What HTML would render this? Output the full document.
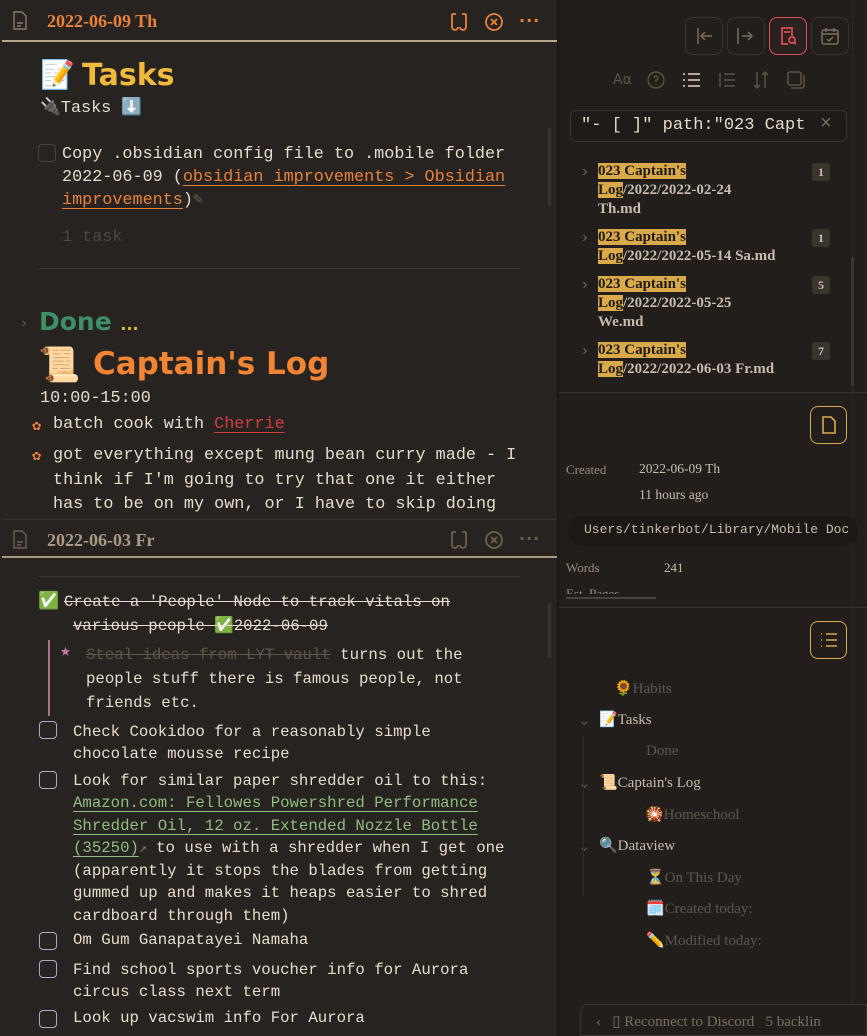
<!DOCTYPE html>
<html><head><meta charset="utf-8"><style>
*{margin:0;padding:0;box-sizing:border-box}
body{width:867px;height:1036px;background:#272320;overflow:hidden;position:relative;font-family:"Liberation Mono",monospace;color:#e6dccd}
.a{position:absolute;white-space:nowrap}
.mono{font-family:"Liberation Mono",monospace;font-size:16.8px;color:#e6dccd}
.m2{font-size:15.7px}
.hdr{font-family:"Liberation Serif",serif;font-weight:bold;font-size:18px}
.ser{font-family:"Liberation Serif",serif}
.cb{position:absolute;width:18px;height:18px;border:1.5px solid #b9a3d6;border-radius:4px}
.lnk{color:#e8823a;text-decoration:underline;text-underline-offset:4px}
.grn{color:#8fbf7f;text-decoration:underline;text-underline-offset:4px}
.hl{background:#d9a94a;color:#1d1a17;font-weight:bold}
.badge{position:absolute;left:812px;width:18px;height:18px;background:#3a342e;border-radius:3px;color:#cbbfae;font:bold 12px "Liberation Serif",serif;text-align:center;line-height:18px}
.tree{font-family:"Liberation Serif",serif;font-size:15px;color:#5f574f}
.dots{position:absolute;font:bold 16px "DejaVu Sans",sans-serif;letter-spacing:1px}
</style></head><body>
<svg class="a" style="left:12px;top:11px" width="16" height="20" viewBox="0 0 16 20"><path d="M2 1h8l4 4v13H2z M5 12h6 M5 15h4" fill="none" stroke="#8a7d6a" stroke-width="1.4"/></svg>
<div class="a hdr" style="left:47px;top:11px;color:#e8823a">2022-06-09 Th</div>
<svg class="a" style="left:449px;top:12px" width="20" height="20" viewBox="0 0 20 20" fill="none" stroke="#e8823a" stroke-width="1.8"><path d="M3 2h4M13 2h4M3 2v13M17 2v13M3 15a3 3 0 0 0 6 0M11 15a3 3 0 0 0 6 0"/></svg>
<svg class="a" style="left:484px;top:12px" width="20" height="20" viewBox="0 0 20 20" fill="none" stroke="#e8823a" stroke-width="1.8"><circle cx="10" cy="10" r="8"/><path d="M7 7l6 6M13 7l-6 6"/></svg>
<div class="dots" style="left:519px;top:11px;color:#e8823a">···</div>
<div class="a" style="left:2px;top:40px;width:555px;height:2px;background:#bba886"></div>

<div class="a" style="left:40px;top:58px;font-size:28px">📝</div>
<div class="a" style="left:82px;top:58px;font:bold 30px 'DejaVu Sans',sans-serif;color:#f3b93d">Tasks</div>
<div class="a mono" style="left:40px;top:97px">🔌Tasks ⬇️</div>
<div class="a" style="left:548px;top:128px;width:3px;height:78px;background:#3a342e"></div>
<div class="cb" style="left:38px;top:144px;border-color:#4a433c;border-width:1.5px"></div>
<div class="a mono" style="left:62px;top:143px;line-height:23px">Copy .obsidian config file to .mobile folder<br>2022-06-09 (<span class="lnk">obsidian improvements &gt; Obsidian </span><br><span class="lnk">improvements</span>)<span style="color:#6b5f50">✎</span></div>
<div class="a mono" style="left:62px;top:228px;color:#514840">1 task</div>
<div class="a" style="left:38px;top:268px;width:482px;height:1px;background:#3d3731"></div>

<div class="a" style="left:20px;top:316px;color:#6b6058;font-size:13px">›</div>
<div class="a" style="left:39px;top:307px;font:bold 25px 'DejaVu Sans',sans-serif;color:#3f8f68">Done <span style="color:#e0c020;font-size:16px">...</span></div>
<div class="a" style="left:38px;top:345px;font-size:34px">📜</div>
<div class="a" style="left:93px;top:346px;font:bold 31px 'DejaVu Sans',sans-serif;color:#f28434">Captain's Log</div>
<div class="a mono" style="left:40px;top:389px">10:00-15:00</div>
<div class="a" style="left:32px;top:416px;color:#e8823a;font-size:15px">✿</div>
<div class="a mono" style="left:53px;top:415px">batch cook with <span style="color:#d23e3e;text-decoration:underline;text-underline-offset:4px">Cherrie</span></div>
<div class="a" style="left:32px;top:446px;color:#e8823a;font-size:15px">✿</div>
<div class="a mono" style="left:53px;top:444px;line-height:24.5px">got everything except mung bean curry made - I<br>think if I'm going to try that one it either<br>has to be on my own, or I have to skip doing</div>

<div class="a" style="left:2px;top:519px;width:555px;height:38px;background:#272320;border-top:1px solid #3a342e"></div>
<svg class="a" style="left:12px;top:530px" width="16" height="20" viewBox="0 0 16 20"><path d="M2 1h8l4 4v13H2z M5 12h6 M5 15h4" fill="none" stroke="#6b6053" stroke-width="1.4"/></svg>
<div class="a hdr" style="left:47px;top:530px;color:#a99a86">2022-06-03 Fr</div>
<svg class="a" style="left:449px;top:530px" width="20" height="20" viewBox="0 0 20 20" fill="none" stroke="#6b6053" stroke-width="1.8"><path d="M3 2h4M13 2h4M3 2v13M17 2v13M3 15a3 3 0 0 0 6 0M11 15a3 3 0 0 0 6 0"/></svg>
<svg class="a" style="left:484px;top:530px" width="20" height="20" viewBox="0 0 20 20" fill="none" stroke="#6b6053" stroke-width="1.8"><circle cx="10" cy="10" r="8"/><path d="M7 7l6 6M13 7l-6 6"/></svg>
<div class="dots" style="left:519px;top:529px;color:#6b6053">···</div>
<div class="a" style="left:2px;top:556px;width:555px;height:2px;background:#a8967a"></div>
<div class="a" style="left:38px;top:576px;width:482px;height:1px;background:#3d3731"></div>
<div class="a" style="left:548px;top:603px;width:3px;height:55px;background:#3a342e"></div>

<div class="a" style="left:38px;top:591px;font-size:17px">✅</div>
<div class="a mono m2" style="left:64px;top:593px;text-decoration:line-through">Create a 'People' Node to track vitals on </div>
<div class="a mono m2" style="left:73px;top:615px;text-decoration:line-through">various people ✅2022-06-09</div>
<div class="a" style="left:48px;top:640px;width:2px;height:76px;background:#b0708f"></div>
<div class="a" style="left:60px;top:640px;color:#c079a0;font-size:18px">★</div>
<div class="a mono m2" style="left:86px;top:643px;line-height:24px"><span style="color:#5f564c;text-decoration:line-through">Steal ideas from LYT vault</span> turns out the<br>people stuff there is famous people, not<br>friends etc.</div>
<div class="cb" style="left:39px;top:721px"></div>
<div class="a mono m2" style="left:73px;top:721px;line-height:22px">Check Cookidoo for a reasonably simple<br>chocolate mousse recipe</div>
<div class="cb" style="left:39px;top:771px"></div>
<div class="a mono m2" style="left:73px;top:770px;line-height:22.3px">Look for similar paper shredder oil to this:<br><span class="grn">Amazon.com: Fellowes Powershred Performance </span><br><span class="grn">Shredder Oil, 12 oz. Extended Nozzle Bottle </span><br><span class="grn">(35250)</span><span style="color:#8a7d6a;font-size:13px">↗</span> to use with a shredder when I get one<br>(apparently it stops the blades from getting<br>gummed up and makes it heaps easier to shred<br>cardboard through them)</div>
<div class="cb" style="left:39px;top:932px"></div>
<div class="a mono m2" style="left:73px;top:931px">Om Gum Ganapatayei Namaha</div>
<div class="cb" style="left:39px;top:960px"></div>
<div class="a mono m2" style="left:73px;top:959px;line-height:22px">Find school sports voucher info for Aurora<br>circus class next term</div>
<div class="cb" style="left:39px;top:1010px"></div>
<div class="a mono m2" style="left:73px;top:1009px">Look up vacswim info For Aurora</div>

<div class="a" style="left:557px;top:0;width:2px;height:1036px;background:#1b1815"></div>
<div class="a" style="left:559px;top:0;width:308px;height:1036px;background:#221e1b"></div>
<div class="a" style="left:852px;top:0;width:1px;height:1036px;background:#2f2a25"></div>
<div class="a" style="left:685px;top:17px;width:38px;height:38px;border:1px solid #3a342e;border-radius:8px"></div>
<div class="a" style="left:727px;top:17px;width:38px;height:38px;border:1px solid #3a342e;border-radius:8px"></div>
<div class="a" style="left:769px;top:17px;width:38px;height:38px;border:1.5px solid #e05050;border-radius:8px;background:#2a2220"></div>
<div class="a" style="left:811px;top:17px;width:38px;height:38px;border:1px solid #3a342e;border-radius:8px"></div>
<svg class="a" style="left:694px;top:26px" width="20" height="20" viewBox="0 0 20 20" fill="none" stroke="#7a6e60" stroke-width="1.5"><path d="M4 2v16M18 10H7M11 6l-4 4 4 4"/></svg>
<svg class="a" style="left:736px;top:26px" width="20" height="20" viewBox="0 0 20 20" fill="none" stroke="#7a6e60" stroke-width="1.5"><path d="M2 2v16M16 10H6M12 6l4 4-4 4"/></svg>
<svg class="a" style="left:778px;top:26px" width="20" height="20" viewBox="0 0 20 20" fill="none" stroke="#e05050" stroke-width="1.7"><path d="M10 18H4V2h10v8M6 6h6"/><circle cx="14" cy="14" r="3"/><path d="M16 16l2 2"/></svg>
<svg class="a" style="left:820px;top:26px" width="20" height="20" viewBox="0 0 20 20" fill="none" stroke="#7a6e60" stroke-width="1.5"><rect x="2" y="4" width="16" height="14" rx="2"/><path d="M2 8h16M6 2v4M14 2v4M7 13l2 2 4-4"/></svg>
<div class="a" style="left:613px;top:72px;color:#5d5448;font:14px 'DejaVu Sans',sans-serif">Aα</div>
<svg class="a" style="left:647px;top:71px" width="18" height="18" viewBox="0 0 18 18" fill="none" stroke="#5d5448" stroke-width="1.4"><circle cx="9" cy="9" r="8"/><path d="M7 7a2 2 0 1 1 2 2v2M9 13v1"/></svg>
<svg class="a" style="left:682px;top:72px" width="18" height="16" viewBox="0 0 18 16" fill="none" stroke="#c8bcad" stroke-width="1.8"><path d="M6 2h12M6 8h12M6 14h12M1 2h2M1 8h2M1 14h2"/></svg>
<svg class="a" style="left:717px;top:72px" width="18" height="16" viewBox="0 0 18 16" fill="none" stroke="#5d5448" stroke-width="1.5"><path d="M7 2h11M7 8h11M7 14h11M3 1v14"/></svg>
<svg class="a" style="left:752px;top:70px" width="18" height="20" viewBox="0 0 18 20" fill="none" stroke="#5d5448" stroke-width="1.5"><path d="M5 2v16M2 15l3 3 3-3M13 18V2M10 5l3-3 3 3"/></svg>
<svg class="a" style="left:787px;top:71px" width="18" height="18" viewBox="0 0 18 18" fill="none" stroke="#5d5448" stroke-width="1.5"><rect x="1" y="1" width="13" height="13" rx="2"/><path d="M17 4v11a2 2 0 0 1-2 2H4"/></svg>
<div class="a" style="left:570px;top:110px;width:277px;height:32px;border:1px solid #3a342e;border-radius:6px;background:#1f1b18;overflow:hidden"></div>
<div class="a mono" style="left:581px;top:116px;width:230px;overflow:hidden;font-size:17px">"- [ ]" path:"023 Capt</div>
<div class="a" style="left:820px;top:113px;color:#7a6e60;font-size:20px">×</div>
<div class="a" style="left:851px;top:258px;width:3px;height:128px;background:#3d3731"></div>
<div class="ser" style="position:absolute;left:598px;top:162px;font-size:15px;line-height:19px;color:#c8bcad;font-weight:bold">
<div style="height:66px"><span class="hl">023 Captain's</span><br><span class="hl">Log</span>/2022/2022-02-24<br>Th.md</div>
<div style="height:47px"><span class="hl">023 Captain's</span><br><span class="hl">Log</span>/2022/2022-05-14 Sa.md</div>
<div style="height:66px"><span class="hl">023 Captain's</span><br><span class="hl">Log</span>/2022/2022-05-25<br>We.md</div>
<div><span class="hl">023 Captain's</span><br><span class="hl">Log</span>/2022/2022-06-03 Fr.md</div>
</div>
<div class="a" style="left:580px;top:163px;color:#6b6058">›</div>
<div class="a" style="left:580px;top:229px;color:#6b6058">›</div>
<div class="a" style="left:580px;top:276px;color:#6b6058">›</div>
<div class="a" style="left:580px;top:342px;color:#6b6058">›</div>
<div class="badge" style="top:163px">1</div>
<div class="badge" style="top:229px">1</div>
<div class="badge" style="top:276px">5</div>
<div class="badge" style="top:342px">7</div>
<div class="a" style="left:559px;top:392px;width:308px;height:1px;background:#3a342e"></div>
<div class="a" style="left:810px;top:406px;width:37px;height:38px;border:1.5px solid #d9a94a;border-radius:8px"></div>
<svg class="a" style="left:819px;top:415px" width="20" height="20" viewBox="0 0 20 20" fill="none" stroke="#d9a94a" stroke-width="1.6"><path d="M4 2h8l4 4v12H4z"/></svg>
<div class="a ser" style="left:566px;top:462px;font-size:13px;color:#9a8d7c">Created</div>
<div class="a ser" style="left:639px;top:461px;font-size:13.5px;color:#c8bcad">2022-06-09 Th</div>
<div class="a ser" style="left:639px;top:487px;font-size:13.5px;color:#c8bcad">11 hours ago</div>
<div class="a" style="left:568px;top:516px;width:290px;height:30px;background:#1b1815;border-radius:14px"></div>
<div class="a" style="left:584px;top:522px;font-size:13px;color:#c8bcad;width:264px;overflow:hidden">Users/tinkerbot/Library/Mobile Docu</div>
<div class="a ser" style="left:566px;top:560px;font-size:13px;color:#9a8d7c">Words</div>
<div class="a ser" style="left:664px;top:560px;font-size:13px;color:#c8bcad">241</div>
<div class="a ser" style="left:566px;top:586px;font-size:13px;color:#9a8d7c;height:8px;overflow:hidden">Est. Pages</div>
<div class="a" style="left:566px;top:597px;width:90px;height:2px;background:#4a433c"></div>
<div class="a" style="left:559px;top:607px;width:308px;height:1px;background:#3a342e"></div>
<div class="a" style="left:810px;top:621px;width:37px;height:38px;border:1.5px solid #d9a94a;border-radius:8px"></div>
<svg class="a" style="left:819px;top:630px" width="20" height="20" viewBox="0 0 20 20" fill="none" stroke="#d9a94a" stroke-width="1.6"><path d="M7 4h11M7 10h11M7 16h11M2 4h1M2 10h1M2 16h1"/></svg>
<div class="tree">
<div class="a" style="left:614px;top:679px">🌻Habits</div>
<div class="a" style="left:578px;top:711px;color:#5f574f">⌄</div>
<div class="a" style="left:599px;top:710px;color:#c8bcad">📝Tasks</div>
<div class="a" style="left:646px;top:743px">Done</div>
<div class="a" style="left:578px;top:774px">⌄</div>
<div class="a" style="left:599px;top:773px;color:#c8bcad">📜Captain's Log</div>
<div class="a" style="left:645px;top:805px">🎇Homeschool</div>
<div class="a" style="left:578px;top:837px">⌄</div>
<div class="a" style="left:599px;top:836px;color:#c8bcad">🔍Dataview</div>
<div class="a" style="left:646px;top:868px">⏳On This Day</div>
<div class="a" style="left:646px;top:899px">🗓️Created today:</div>
<div class="a" style="left:646px;top:931px">✏️Modified today:</div>
</div>
<div class="a" style="left:583px;top:736px;width:1px;height:160px;background:#332e29"></div>
<div class="a" style="left:580px;top:1004px;width:287px;height:32px;border:1px solid #3a342e;border-radius:8px 0 0 0;background:#221e1b"></div>
<div class="a ser" style="left:596px;top:1012px;font-size:15px;color:#7a6e60">‹ &nbsp;&nbsp;▯ Reconnect to Discord &nbsp;&nbsp;5 backlin</div>
</body></html>
